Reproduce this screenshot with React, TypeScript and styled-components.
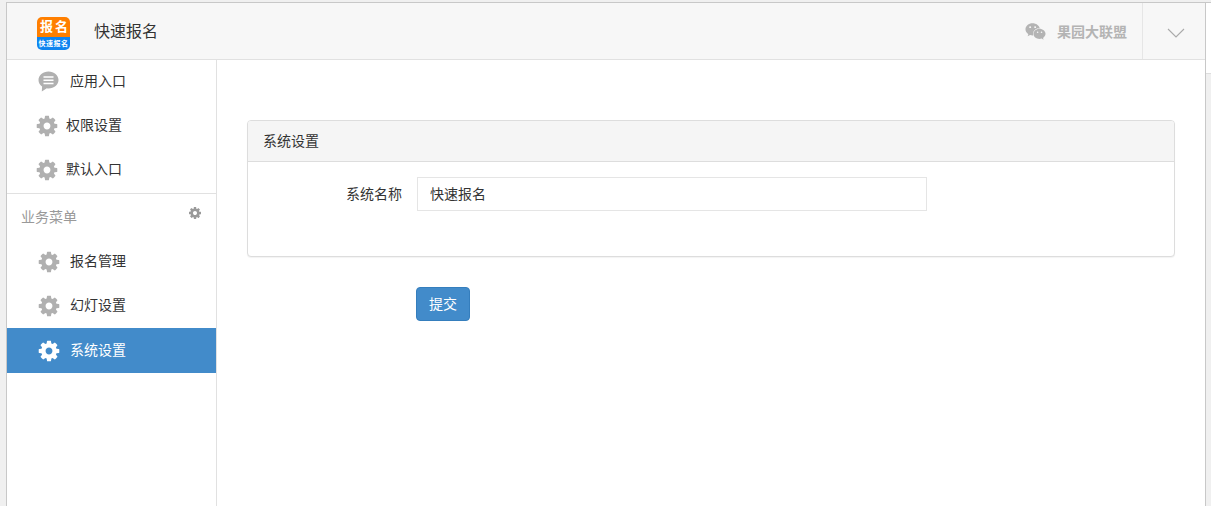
import * as React from 'react';
import styled, { createGlobalStyle } from 'styled-components';
import { FaWeixin } from 'react-icons/fa';

const GlobalStyle = createGlobalStyle`
  html, body {
    margin: 0;
    padding: 0;
    height: 100%;
    background: #f0f0f0;
    overflow: hidden;
  }
  body {
    font-family: "Liberation Sans", "Noto Sans CJK SC", sans-serif;
    font-size: 14px;
    color: #333;
  }
  #root {
    height: 100%;
  }
`;

const Page = styled.div`
  box-sizing: border-box;
  height: 506px;
  display: flex;
  padding: 2px 0 0 6px;
  background: #f0f0f0;
`;

const Frame = styled.div`
  box-sizing: border-box;
  flex: none;
  width: 1200px;
  height: 100%;
  display: flex;
  flex-direction: column;
  background: #fff;
  border-top: 1px solid #c8c8c8;
  border-left: 1px solid #c8c8c8;
  border-right: 1px solid #c8c8c8;
`;

const SideStrip = styled.div`
  flex: 1;
  min-width: 0;
  border-top: 1px solid #c8c8c8;
`;

const SideStripTop = styled.div`
  height: 70px;
  background: #fff;
  border-bottom: 1px solid #ddd;
`;

const Header = styled.header`
  box-sizing: border-box;
  flex: none;
  height: 57px;
  display: flex;
  align-items: center;
  background: #f7f7f7;
  border-bottom: 1px solid #e1e1e1;
`;

const Logo = styled.div`
  flex: none;
  width: 33px;
  height: 33px;
  margin: 5px 0 0 30px;
  border-radius: 5px;
  overflow: hidden;
  display: flex;
  flex-direction: column;
`;

const LogoTop = styled.div`
  height: 20px;
  padding-left: 3px;
  background: #ff7f00;
  color: #fff;
  font-size: 13px;
  font-weight: 700;
  line-height: 19px;
  letter-spacing: 2px;
  white-space: nowrap;
`;

const LogoBottom = styled.div`
  height: 13px;
  background: #0f84f0;
  color: #fff;
  font-size: 7px;
  font-weight: 700;
  line-height: 13px;
  letter-spacing: 0.5px;
  text-align: center;
  white-space: nowrap;
`;

const AppTitle = styled.div`
  margin-left: 24px;
  margin-top: -2px;
  font-size: 16px;
  color: #333;
`;

const HeaderRight = styled.div`
  margin-left: auto;
  height: 100%;
  display: flex;
  align-items: center;
`;

const Account = styled.div`
  display: flex;
  align-items: center;
  padding-right: 15px;
  color: #b4b4b4;
  font-size: 14px;
  font-weight: 700;
  svg {
    width: 21px;
    height: 21px;
    margin-left: 1px;
    margin-right: 11px;
  }
`;

const Toggle = styled.div`
  box-sizing: border-box;
  width: 63px;
  height: 100%;
  padding: 3px 0 0 4px;
  display: flex;
  align-items: center;
  justify-content: center;
  border-left: 1px solid #e6e6e6;
  color: #aaa;
`;

const Body = styled.div`
  flex: 1;
  min-height: 0;
  display: flex;
`;

const Sidebar = styled.nav`
  box-sizing: border-box;
  flex: none;
  width: 210px;
  border-right: 1px solid #e1e1e1;
  background: #fff;
`;

const MenuGroup = styled.div`
  margin-top: -1px;
  padding-bottom: 2px;
  border-bottom: 1px solid #e1e1e1;
`;

const MenuItem = styled.a<{ $active?: boolean; $tight?: boolean }>`
  box-sizing: border-box;
  height: ${props => (props.$active ? 45 : 44)}px;
  margin-top: ${props => (props.$active ? 1 : 0)}px;
  display: flex;
  align-items: center;
  padding-left: ${props => (props.$tight ? 29 : 31)}px;
  padding-bottom: ${props => (props.$active ? 4 : 2)}px;
  color: ${props => (props.$active ? '#fff' : '#333')};
  background: ${props => (props.$active ? '#428bca' : 'transparent')};
`;

const ItemIcon = styled.svg<{ $active?: boolean; $tight?: boolean }>`
  flex: none;
  width: 24px;
  height: 24px;
  margin: 4px ${props => (props.$tight ? 7 : 9)}px 0 -1px;
  color: ${props => (props.$active ? '#fff' : '#b0b0b0')};
`;

const ChatGlyph = styled.svg`
  flex: none;
  width: 21px;
  height: 21px;
  margin: 2px 11px 0 0;
  color: #b0b0b0;
`;

const SectionTitle = styled.div`
  box-sizing: border-box;
  height: 45px;
  display: flex;
  align-items: center;
  justify-content: space-between;
  padding: 0 14px 2px 14px;
  color: #999;
`;

const SectionGear = styled.svg`
  width: 14px;
  height: 14px;
  margin-top: -6px;
  color: #999;
`;

const Main = styled.main`
  flex: 1;
  min-width: 0;
  padding: 60px 30px 0 30px;
`;

const Panel = styled.section`
  box-sizing: border-box;
  height: 137px;
  background: #fff;
  border: 1px solid #ddd;
  border-radius: 4px;
  box-shadow: 0 1px 1px rgba(0, 0, 0, 0.05);
`;

const PanelHeading = styled.div`
  box-sizing: border-box;
  height: 41px;
  display: flex;
  align-items: center;
  padding: 0 15px 2px;
  background: #f5f5f5;
  border-bottom: 1px solid #ddd;
  border-radius: 3px 3px 0 0;
`;

const FormRow = styled.div`
  display: flex;
  align-items: center;
  padding-top: 15px;
`;

const FormLabel = styled.label`
  box-sizing: border-box;
  width: 154px;
  text-align: right;
  margin-top: -3px;
`;

const TextInput = styled.input`
  box-sizing: border-box;
  width: 510px;
  height: 34px;
  margin-left: 15px;
  padding: 0 12px 2px;
  border: 1px solid #e5e5e5;
  background: #fff;
  color: #333;
  font: inherit;
  outline: none;
`;

const Actions = styled.div`
  padding: 30px 0 0 169px;
`;

const SubmitButton = styled.button`
  box-sizing: border-box;
  width: 54px;
  height: 34px;
  padding: 0 0 2px;
  background: #428bca;
  border: 1px solid #357ebd;
  border-radius: 4px;
  color: #fff;
  font: inherit;
`;

const COG_PATH =
  'M1152 896q0-106-75-181t-181-75-181 75-75 181 75 181 181 75 181-75 75-181zm512-109v222q0 12-8 23t-20 13l-185 28q-19 54-39 91 35 50 107 138 10 12 10 25t-9 23q-27 37-99 108t-94 71q-12 0-26-9l-138-108q-44 23-91 38-16 136-29 186-7 28-36 28h-222q-14 0-24.500-8.500t-11.500-21.500l-28-184q-49-16-90-37l-141 107q-10 9-25 9-14 0-25-11-126-114-165-168-7-10-7-23 0-12 8-23 15-21 51-66.500t54-70.500q-27-50-41-99l-183-27q-13-2-21-12.500t-8-23.500v-222q0-12 8-23t19-13l186-28q14-46 39-92-40-57-107-138-10-12-10-24 0-10 9-23 26-36 98.500-107.500t94.500-71.500q13 0 26 10l138 107q44-23 91-38 16-136 29-186 7-28 36-28h222q14 0 24.500 8.500t11.500 21.500l28 184q49 16 90 37l142-107q9-9 24-9 13 0 25 10 129 119 165 170 7 8 7 22 0 12-8 23-15 21-51 66.500t-54 70.500q26 50 41 98l183 28q13 2 21 12.500t8 23.500z';

const Cog: React.FC<{ $active?: boolean; $tight?: boolean }> = ({ $active, $tight }) => (
  <ItemIcon $active={$active} $tight={$tight} viewBox="0 0 1792 1792">
    <path d={COG_PATH} fill="currentColor" />
  </ItemIcon>
);

const ChatIcon = () => (
  <ChatGlyph viewBox="0 0 21 21" fill="none">
    <path d="M10.5 0.5C4.9 0.5 0.5 4.2 0.5 9c0 2.7 1.4 5 3.6 6.600L3.800 20.500l5-3.200c.6.1 1.100.2 1.700.2 5.600 0 10-3.800 10-8.500S16.100.5 10.500.5z" fill="currentColor" />
    <path d="M5.500 6h10M5.500 9.200h10M5.500 12.400h10" stroke="#fff" strokeWidth="1.500" />
  </ChatGlyph>
);

const Chevron = () => (
  <svg width="18" height="10" viewBox="0 0 18 10" fill="none">
    <path d="M1 1l8 8 8-8" stroke="currentColor" strokeWidth="1.100" />
  </svg>
);

const App: React.FC = () => {
  return (
    <Page>
      <GlobalStyle />
      <Frame>
        <Header>
          <Logo>
            <LogoTop>报名</LogoTop>
            <LogoBottom>快速报名</LogoBottom>
          </Logo>
          <AppTitle>快速报名</AppTitle>
          <HeaderRight>
            <Account>
              <FaWeixin />
              果园大联盟
            </Account>
            <Toggle>
              <Chevron />
            </Toggle>
          </HeaderRight>
        </Header>
        <Body>
          <Sidebar>
            <MenuGroup>
              <MenuItem>
                <ChatIcon />
                应用入口
              </MenuItem>
              <MenuItem $tight>
                <Cog $tight />
                权限设置
              </MenuItem>
              <MenuItem $tight>
                <Cog $tight />
                默认入口
              </MenuItem>
            </MenuGroup>
            <SectionTitle>
              业务菜单
              <SectionGear viewBox="0 0 1792 1792">
                <path d={COG_PATH} fill="currentColor" />
              </SectionGear>
            </SectionTitle>
            <MenuItem>
              <Cog />
              报名管理
            </MenuItem>
            <MenuItem>
              <Cog />
              幻灯设置
            </MenuItem>
            <MenuItem $active>
              <Cog $active />
              系统设置
            </MenuItem>
          </Sidebar>
          <Main>
            <Panel>
              <PanelHeading>系统设置</PanelHeading>
              <FormRow>
                <FormLabel>系统名称</FormLabel>
                <TextInput defaultValue="快速报名" />
              </FormRow>
            </Panel>
            <Actions>
              <SubmitButton>提交</SubmitButton>
            </Actions>
          </Main>
        </Body>
      </Frame>
      <SideStrip>
        <SideStripTop />
      </SideStrip>
    </Page>
  );
};

export default App;
